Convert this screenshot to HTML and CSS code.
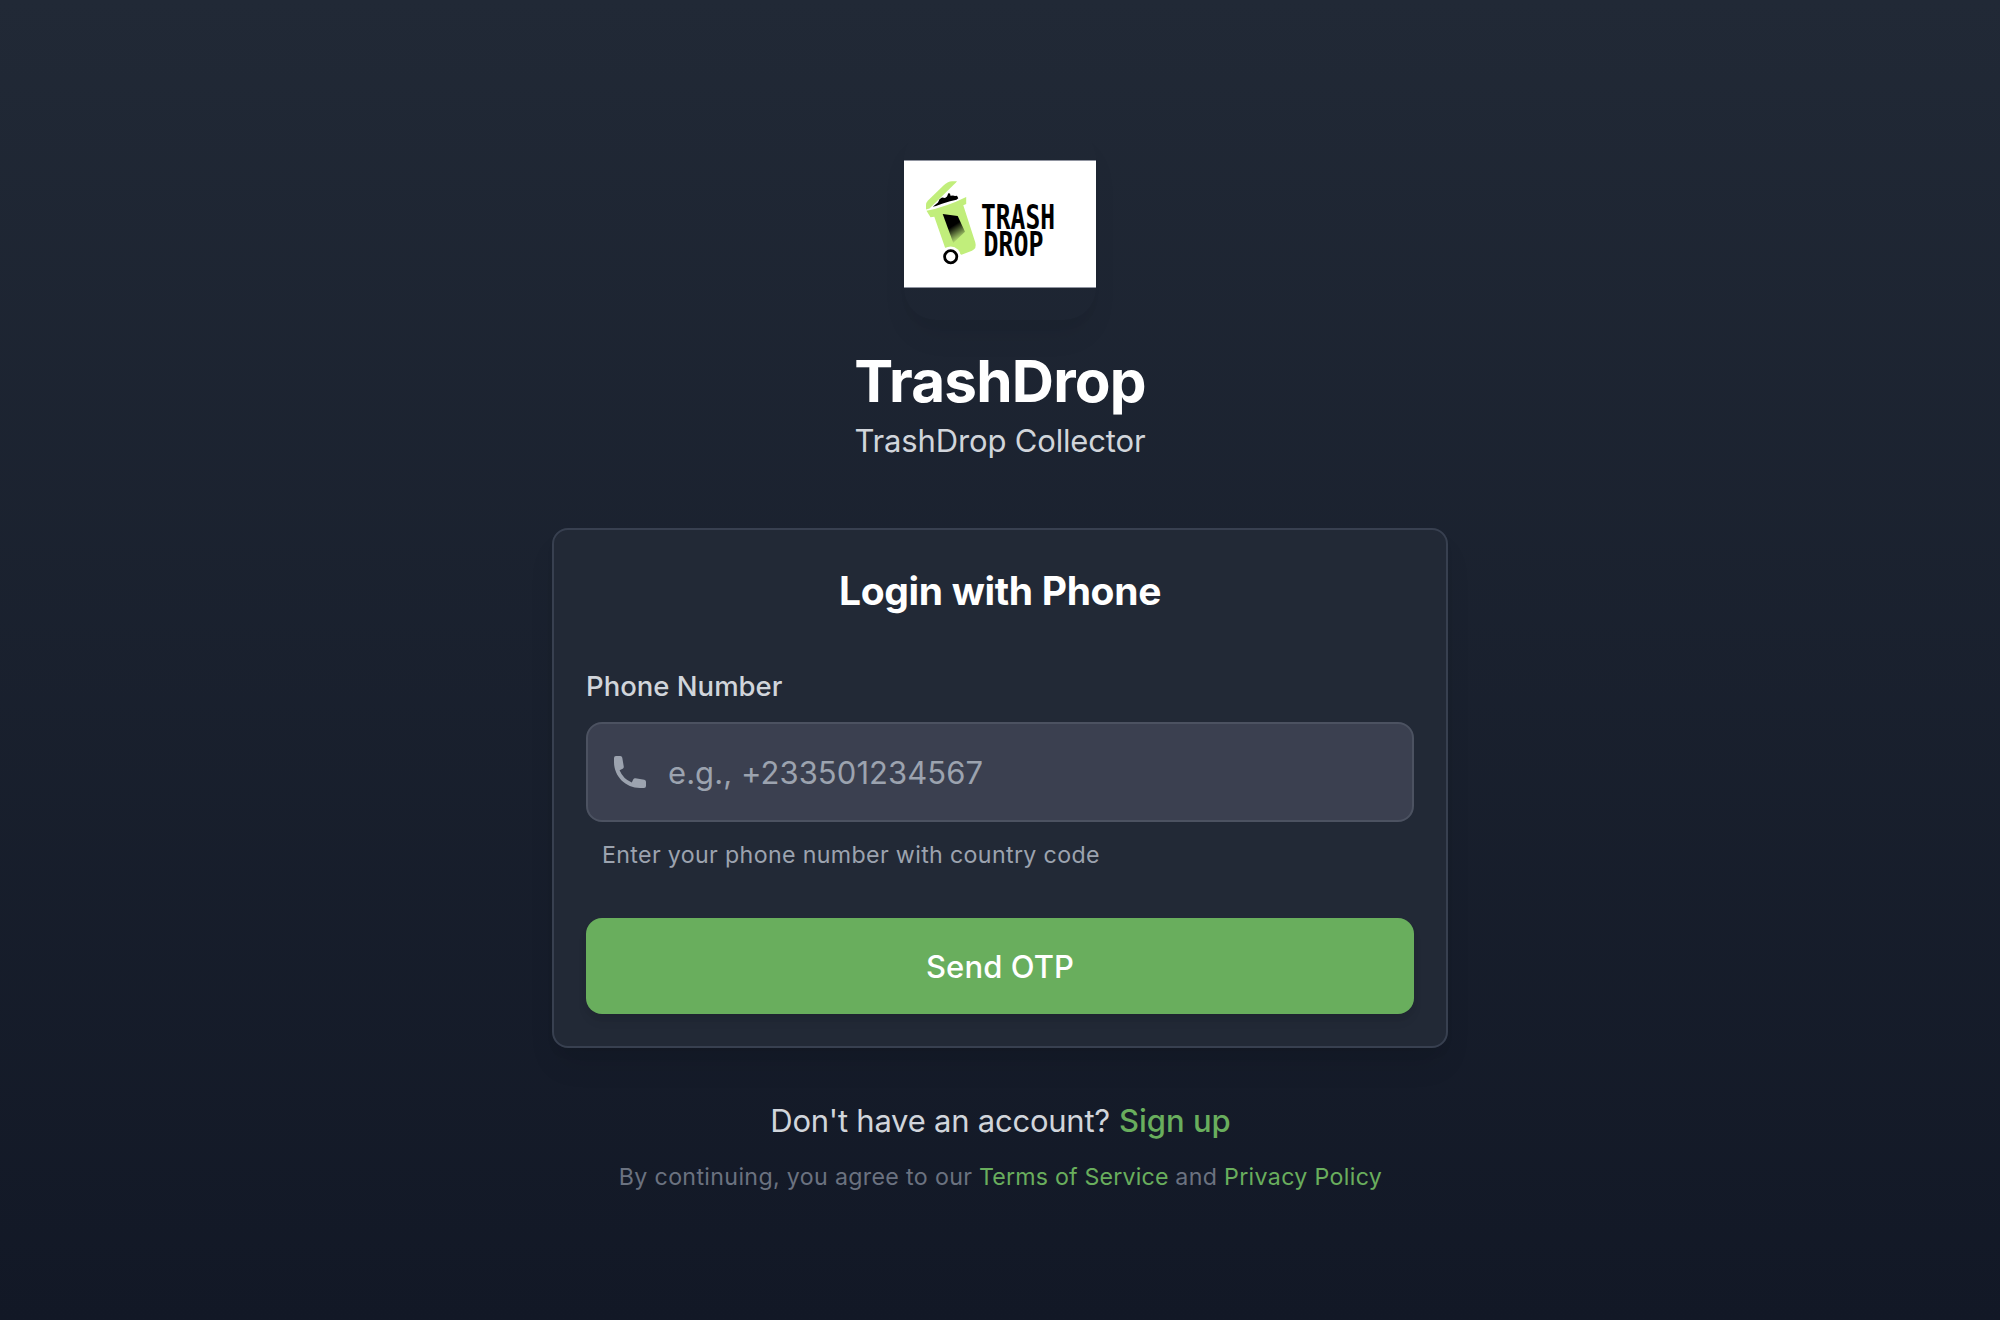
FILE: index.html
```html
<!DOCTYPE html>
<html lang="en">
<head>
<meta charset="utf-8">
<title>TrashDrop</title>
<link rel="stylesheet" href="styles.css">
</head>
<body>
<main class="page">
  <header class="brand">
    <div class="logo">
      <svg class="logo-image" viewBox="0 0 192 128" role="img" aria-label="Trash Drop">
        <defs>
          <linearGradient id="panel" gradientUnits="userSpaceOnUse" x1="44" y1="61" x2="56" y2="80">
            <stop offset="0.3" stop-color="#000"/>
            <stop offset="1" stop-color="#000" stop-opacity="0"/>
          </linearGradient>
        </defs>
        <rect class="logo-edge" width="192" height="128"/>
        <rect class="logo-paper" y="1" width="192" height="126"/>
        <path class="bin" d="M22 49.5V45Q22 42.5 24 40.5L40 25Q44 21.2 48 21.2H53L52 22.5 25.5 48.5Z"/>
        <path d="M28.7 46.7 34 42.5 35.5 39.3 38 37.5 41 38 43 36.5 44.3 33.2 46 33.5 46.5 35.8 49 35.5 51 36 53 35.8 54.3 38.3 52.5 39.8 46 41.2 38 43.8 32 46Z"/>
        <path class="bin" d="M22.5 50.8Q42 47 62.2 37V44L59.3 45.2 71.3 82.5Q73 88.5 68 90.7L57.5 94.7 41 87.5 30.3 56.7 26.5 57.3Z"/>
        <path fill="url(#panel)" d="M38.7 54 53.7 56 61 71.7 49.3 83Z"/>
        <circle class="logo-paper" cx="46.7" cy="96.7" r="10.2"/>
        <circle class="wheel" cx="46.7" cy="96.7" r="6.1"/>
        <g class="wordmark">
          <text x="77" y="68.5" textLength="74" lengthAdjust="spacingAndGlyphs">TRASH</text>
          <text x="79.5" y="95.7" textLength="60" lengthAdjust="spacingAndGlyphs">DROP</text>
        </g>
      </svg>
    </div>
    <h1 class="title">TrashDrop</h1>
    <p class="subtitle">TrashDrop Collector</p>
  </header>

  <form class="card">
    <h2 class="card-title">Login with Phone</h2>
    <label class="label" for="phone">Phone Number</label>
    <div class="field">
      <svg class="field-icon" viewBox="0 0 20 20" aria-hidden="true"><path d="M2 3a1 1 0 011-1h2.153a1 1 0 01.986.836l.74 4.435a1 1 0 01-.54 1.06l-1.548.773a11.037 11.037 0 006.105 6.105l.774-1.548a1 1 0 011.059-.54l4.435.74a1 1 0 01.836.986V17a1 1 0 01-1 1h-2C7.82 18 2 12.18 2 5V3z"/></svg>
      <input class="field-input" id="phone" type="tel" placeholder="e.g., +233501234567">
    </div>
    <p class="hint">Enter your phone number with country code</p>
    <button class="button" type="button">Send OTP</button>
  </form>

  <p class="signup"><span class="signup-text">Don't have an account?</span><a class="signup-link">Sign up</a></p>
  <p class="terms"><span>By continuing, you agree to our</span><a class="link service">Terms of Service</a><span>and</span><a class="link">Privacy Policy</a></p>
</main>
</body>
</html>
```
FILE: styles.css
```css
* { box-sizing: border-box; margin: 0; }

body {
  font-family: Inter, "Liberation Sans", sans-serif;
  color: #fff;
}

.page {
  height: 1320px;
  padding-top: 128px;
  display: flex;
  flex-direction: column;
  align-items: center;
  background: linear-gradient(#212936, #121826);
}

.brand {
  display: flex;
  flex-direction: column;
  align-items: center;
}

.logo {
  width: 192px;
  height: 192px;
  display: flex;
  align-items: center;
  border-radius: 32px;
  box-shadow: 0 20px 30px -6px rgba(0, 0, 0, .07), 0 8px 12px -4px rgba(0, 0, 0, .03);
}
.logo-image { display: block; width: 192px; height: 128px; }
.logo-edge { fill: #9094a0; }
.logo-paper { fill: #fff; }
.bin { fill: #c1ee7b; }
.wheel { fill: #fff; stroke: #000; stroke-width: 2.8; }
.wordmark {
  font: bold 32.8px "DejaVu Sans Mono", monospace;
  fill: #000;
}

.title {
  margin-top: 25px;
  font-size: 58.4px;
  line-height: 72px;
  font-weight: 700;
  letter-spacing: -.8px;
}
.subtitle {
  font-size: 31px;
  line-height: 48px;
  letter-spacing: -.16px;
  color: #d1d5db;
}

.card {
  width: 896px;
  height: 520px;
  margin-top: 63px;
  padding: 32px;
  display: flex;
  flex-direction: column;
  background: #222936;
  border: 2px solid #384050;
  border-radius: 16px;
  box-shadow: 0 20px 30px -6px rgba(0, 0, 0, .1), 0 8px 12px -4px rgba(0, 0, 0, .05);
}
.card-title {
  font-size: 39px;
  line-height: 58px;
  font-weight: 700;
  letter-spacing: -.32px;
  text-align: center;
}
.label {
  margin-top: 46px;
  font-size: 27.5px;
  line-height: 40px;
  font-weight: 500;
  letter-spacing: 0;
  color: #d1d5db;
}
.field {
  height: 100px;
  margin-top: 16px;
  padding-left: 22px;
  display: flex;
  align-items: center;
  gap: 18px;
  background: #3b4050;
  border: 2px solid #4c5261;
  border-radius: 16px;
}
.field-icon { width: 40px; height: 40px; fill: #9ca3af; }
.field-input {
  flex: 1;
  height: 50px;
  padding: 1px 0;
  border: 0;
  outline: 0;
  background: none;
  font: 400 31px/48px Inter, sans-serif;
  letter-spacing: .06px;
  color: #fff;
}
.field-input::placeholder { color: #9ca3af; opacity: 1; }
.hint {
  margin-top: 16px;
  padding-left: 16px;
  font-size: 23.2px;
  line-height: 34px;
  letter-spacing: .35px;
  color: #9ca3af;
}
.button {
  height: 96px;
  margin-top: 46px;
  padding: 2px 0 0;
  border: 0;
  border-radius: 16px;
  background: #69ae5d;
  box-shadow: 0 8px 12px -2px rgba(0, 0, 0, .08), 0 4px 8px -2px rgba(0, 0, 0, .05);
  font: 500 31px/94px Inter, sans-serif;
  letter-spacing: .09px;
  color: #fff;
}

.signup {
  margin-top: 49px;
  padding-left: 1px;
  display: flex;
  gap: 9px;
  font-size: 31px;
  line-height: 48px;
}
.signup-text { color: #d1d5db; letter-spacing: -.236px; }
.signup-link { color: #69ae5d; font-weight: 500; }

.terms {
  margin-top: 16px;
  padding-left: 1px;
  display: flex;
  gap: 6.7px;
  font-size: 23.2px;
  line-height: 32px;
  letter-spacing: .34px;
  color: #6b7280;
}
.link { color: #69ae5d; }
.service { letter-spacing: .185px; }
```
